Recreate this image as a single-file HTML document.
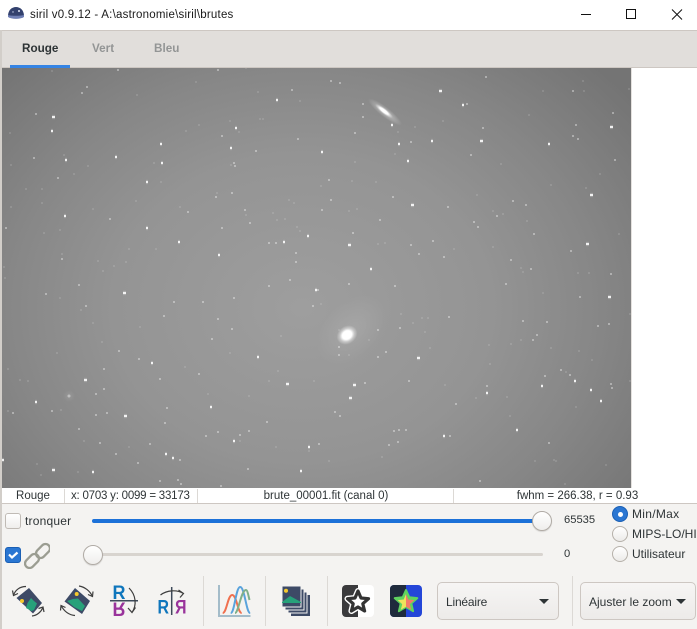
<!DOCTYPE html>
<html><head><meta charset="utf-8">
<style>
html,body{margin:0;padding:0;background:#fff}
#p{position:relative;width:697px;height:629px;overflow:hidden;background:#fff;font-family:"Liberation Sans",sans-serif;font-size:12px;color:#2e3436}
.a{position:absolute;white-space:nowrap}
.tab{font-weight:bold;font-size:11.7px;top:42px}
.st{top:489px;height:14px;line-height:14px;text-align:center;font-size:11.5px;color:#2e3436}
.sep{position:absolute;width:1px;background:#dcd9d5}
.rad{position:absolute;width:16px;height:16px;border-radius:50%;border:1px solid #b6b1aa;background:linear-gradient(#fff,#ecebe9);box-sizing:border-box}
.btn{position:absolute;border:1px solid #cdc7c2;border-radius:5px;background:linear-gradient(#f6f5f4,#edebe9);box-sizing:border-box;height:38px;top:582px}
.car{position:absolute;width:0;height:0;border-left:5px solid transparent;border-right:5px solid transparent;border-top:5px solid #2e3436}
.thumb{position:absolute;width:20px;height:20px;border-radius:50%;border:1px solid #b0aba5;box-sizing:border-box;background:linear-gradient(#fff,#efeeec);box-shadow:0 1px 1px rgba(0,0,0,.12)}
</style></head><body><div id="p">
<!-- title bar -->
<svg class="a" style="left:7px;top:6px" width="18" height="14" viewBox="0 0 18 14"><path d="M1 10C1 4 5 1 9 1s8 3 8 9l-2 2H3z" fill="#33416e"/><path d="M1 9c3 1 12 1 16 0v2c-4 2.500-12 2.500-16 0z" fill="#6f7fb5"/><circle cx="12" cy="5" r="1" fill="#dfe5f5"/><circle cx="6" cy="6" r=".7" fill="#c8d0ea"/></svg>
<div class="a" style="left:30px;top:9px;font-size:11.5px;color:#1a1a1a;letter-spacing:.22px">siril v0.9.12 - A:\astronomie\siril\brutes</div>
<svg class="a" style="left:570px;top:6px" width="120" height="18" viewBox="0 0 120 18" fill="none" stroke="#111" stroke-width="1"><path d="M11 8.500h10"/><rect x="56.500" y="3.500" width="9" height="9"/><path d="M102 4l10 10M112 4l-10 10" transform="translate(0,-.5)"/></svg>
<!-- notebook header -->
<div class="a" style="left:0;top:30px;width:697px;height:38px;background:#e1dedb;border-top:1px solid #cdc7c2;border-bottom:1px solid #cdc7c2;box-sizing:border-box"></div>
<div class="a tab" style="left:22px;color:#2e3436">Rouge</div>
<div class="a tab" style="left:92px;color:#939595">Vert</div>
<div class="a tab" style="left:154px;color:#939595">Bleu</div>
<div class="a" style="left:10px;top:65px;width:60px;height:3px;background:#3584e4"></div>
<!-- image -->
<svg class="a" style="left:2px;top:68px" width="629" height="420" viewBox="0 0 629 420">
<defs>
<radialGradient id="bg" gradientUnits="userSpaceOnUse" cx="0" cy="0" r="1" gradientTransform="translate(300 240) scale(420 340)">
<stop offset="0" stop-color="#9e9e9e"/><stop offset=".45" stop-color="#949494"/><stop offset=".7" stop-color="#878787"/><stop offset="1" stop-color="#747474"/></radialGradient>
<radialGradient id="h"><stop offset="0" stop-color="#fff" stop-opacity=".11"/><stop offset="1" stop-color="#fff" stop-opacity="0"/></radialGradient>
<radialGradient id="c"><stop offset="0" stop-color="#fff"/><stop offset=".45" stop-color="#fff"/><stop offset=".7" stop-color="#fff" stop-opacity=".4"/><stop offset="1" stop-color="#fff" stop-opacity="0"/></radialGradient>
<radialGradient id="m"><stop offset="0" stop-color="#fff" stop-opacity=".5"/><stop offset="1" stop-color="#fff" stop-opacity="0"/></radialGradient>
</defs>
<rect width="629" height="420" fill="url(#bg)"/>
<ellipse cx="350" cy="262" rx="42" ry="28" transform="rotate(-45 350 262)" fill="url(#h)"/>
<ellipse cx="345" cy="267" rx="11" ry="9" transform="rotate(-35 345 267)" fill="url(#c)"/>
<ellipse cx="383" cy="44" rx="21" ry="5" transform="rotate(38 383 44)" fill="url(#m)"/>
<ellipse cx="382" cy="43" rx="11" ry="2.800" transform="rotate(38 382 43)" fill="url(#c)"/>
<circle cx="67" cy="328" r="6" fill="url(#h)"/><circle cx="67" cy="328" r="1.500" fill="#c0c0c0"/>
<g transform="translate(-2 -68)" fill="none" stroke="#fff">
<path stroke-width="2" opacity=".12" d="M198 125h2M262 119h2M259 119h2M63 155h2M87 166h2M25 189h2M41 189h2M41 203h2M135 201h2M179 207h2M216 193h2M43 233h2M59 230h2M155 249h2M128 249h2M125 262h2M97 261h2M113 266h2M293 203h2M288 200h2M272 213h2M284 219h2M276 220h2M245 215h2M296 227h2M299 231h2M4 278h2M3 267h2M102 271h2M61 254h2M160 182h2M229 121h2M238 132h2M185 131h2M195 82h2M245 68h2M51 71h2M136 95h2M299 101h2M257 92h2M230 165h2M153 163h2M9 133h2M10 165h2M10 207h2M92 209h2M73 174h2M542 91h2M583 91h2M582 81h2M528 115h2M442 121h2M414 127h2M397 132h2M354 162h2M351 181h2M375 182h2M356 209h2M526 221h2M377 244h2M384 243h2M520 268h2M522 272h2M577 273h2M588 273h2M618 234h2M599 174h2M585 188h2M550 185h2M492 247h2M492 211h2M502 214h2M320 186h2M348 211h2M394 154h2M500 164h2M476 195h2M453 249h2M628 89h2M59 298h2M80 310h2M56 353h2M27 381h2M19 380h2M7 411h2M60 410h2M36 464h2M77 472h2M40 475h2M139 327h2M101 342h2M92 323h2M184 367h2M207 394h2M229 353h2M280 336h2M277 371h2M313 381h2M248 396h2M268 381h2M308 451h2M275 447h2M239 441h2M83 441h2M128 447h2M7 369h2M412 323h2M421 318h2M427 318h2M424 332h2M368 340h2M348 355h2M429 348h2M444 385h2M475 398h2M506 397h2M509 416h2M550 348h2M578 351h2M591 360h2M565 372h2M575 407h2M488 345h2M489 364h2M520 340h2M510 344h2M553 460h2M555 461h2M534 461h2M328 461h2M381 457h2M564 484h2M605 465h2M629 314h2M629 381h2M542 293h2M320 304h2M338 330h2M400 314h2"/>
<path stroke-width="2" opacity=".36" d="M86 87h2M81 93h2M291 90h2M35 114h2M221 136h2M297 139h2M255 151h2M33 158h2M57 178h2M233 163h2M234 166h2M231 193h2M215 197h2M244 210h2M187 212h2M109 219h2M221 228h2M5 228h2M268 243h2M275 243h2M61 259h2M289 280h2M295 253h2M295 262h2M249 223h2M117 70h2M217 70h2M330 81h2M339 83h2M466 104h2M362 117h2M362 104h2M354 133h2M410 142h2M470 155h2M575 125h2M572 136h2M577 139h2M572 91h2M614 160h2M379 220h2M432 241h2M410 245h2M525 205h2M570 251h2M482 128h2M328 180h2M321 210h2M330 200h2M392 197h2M447 207h2M473 222h2M477 227h2M496 216h2M533 234h2M510 260h2M530 269h2M610 274h2M418 254h2M443 257h2M512 201h2M352 233h2M612 113h2M485 77h2M85 306h2M118 351h2M198 374h2M231 329h2M211 339h2M173 302h2M233 298h2M103 369h2M103 389h2M95 394h2M95 415h2M106 413h2M12 413h2M166 408h2M159 379h2M138 359h2M163 316h2M205 436h2M239 435h2M248 431h2M266 422h2M137 463h2M115 454h2M78 429h2M179 460h2M177 480h2M180 484h2M159 481h2M247 469h2M312 306h2M318 444h2M149 444h2M99 443h2M164 423h2M202 302h2M51 411h2M220 486h2M217 319h2M268 286h2M78 285h2M45 294h2M217 432h2M394 286h2M317 290h2M377 330h2M448 317h2M338 347h2M338 355h2M385 352h2M377 357h2M364 383h2M408 381h2M334 412h2M522 321h2M546 322h2M597 326h2M608 324h2M532 340h2M536 335h2M560 370h2M569 375h2M544 376h2M610 384h2M611 388h2M486 386h2M455 404h2M548 443h2M449 436h2M398 430h2M393 431h2M405 430h2M318 444h2M388 445h2M397 442h2M479 481h2M579 297h2M505 284h2M348 284h2M399 328h2M339 416h2"/>
<defs><path id="br" d="M276 100h2M52 117h3M51 131h2M161 163h2M230 148h2M64 216h2M146 228h2M178 242h2M307 236h2M283 242h2M218 255h2M160 144h2M115 157h2M65 160h2M146 182h2M235 128h2M439 91h3M610 127h3M391 125h2M480 141h3M548 144h2M431 141h2M398 144h2M411 205h3M590 195h3M348 245h3M586 244h3M370 269h2M462 105h2M321 152h2M407 161h2M123 293h3M84 380h3M124 416h3M52 470h3M151 363h2M257 357h2M286 384h3M210 407h2M233 441h2M165 454h2M35 402h2M315 290h2M300 471h2M308 447h2M2 460h2M92 472h2M172 458h2M349 398h3M353 385h3M417 358h3M541 386h2M608 297h3M590 390h2M600 401h2M574 381h2M486 393h2M516 430h2M443 436h2"/></defs>
<use href="#br" stroke-width="4.500" opacity=".12"/>
<use href="#br" stroke-width="2.200" opacity=".88"/>
</g>
</svg>
<div class="a" style="left:631px;top:68px;width:1px;height:420px;background:#e4e1de"></div>
<!-- status strip -->
<div class="a st" style="left:3px;width:60px">Rouge</div>
<div class="a" style="left:64px;top:489px;width:1px;height:14px;background:#dcd9d5"></div>
<div class="a st" style="left:71px;text-align:left;letter-spacing:-.22px">x: 0703 y: 0099 = 33173</div>
<div class="a" style="left:197px;top:489px;width:1px;height:14px;background:#dcd9d5"></div>
<div class="a st" style="left:198px;width:256px">brute_00001.fit (canal 0)</div>
<div class="a" style="left:453px;top:489px;width:1px;height:14px;background:#dcd9d5"></div>
<div class="a st" style="left:454px;width:247px">fwhm = 266.38, r = 0.93</div>
<!-- control panel -->
<div class="a" style="left:2px;top:503px;width:695px;height:126px;background:#f4f3f1;border-top:1px solid #cdc7c2;box-sizing:border-box"></div>
<div class="a" style="left:0;top:30px;width:2px;height:599px;background:#d2cec9"></div>
<div class="a" style="left:5px;top:513px;width:16px;height:16px;border:1px solid #c0bbb5;border-radius:3px;box-sizing:border-box;background:linear-gradient(#fff,#efeeec)"></div>
<div class="a" style="left:25px;top:514px;font-size:12px;letter-spacing:.2px">tronquer</div>
<div class="a" style="left:92px;top:519px;width:445px;height:4px;background:#1c71d8;border-radius:2px"></div>
<div class="thumb" style="left:532px;top:511px"></div>
<div class="a" style="left:564px;top:514px;font-size:11.200px">65535</div>
<div class="a" style="left:5px;top:547px;width:16px;height:16px;background:#2a76d2;border:1px solid #1a5fb4;border-radius:3px;box-sizing:border-box"></div>
<svg class="a" style="left:5px;top:547px" width="16" height="16" viewBox="0 0 16 16"><path d="M4 7.500l3 3L12.500 5.500" fill="none" stroke="#fff" stroke-width="2.200"/></svg>
<svg class="a" style="left:24px;top:541px" width="26" height="28" viewBox="0 0 26 28" fill="none" stroke="#9b9d92" stroke-width="2.300"><rect x="11" y="5.500" width="16" height="9" rx="4.500" transform="rotate(-45 19 10)"/><rect x="0" y="15.500" width="16" height="9" rx="4.500" transform="rotate(-45 8 20)"/></svg>
<div class="a" style="left:100px;top:553px;width:443px;height:3px;background:#d8d4cf;border-radius:2px"></div>
<div class="thumb" style="left:83px;top:545px"></div>
<div class="a" style="left:564px;top:548px;font-size:11.200px">0</div>
<!-- radios -->
<div class="rad" style="left:612px;top:506px;background:#2a76d2;border-color:#1a5fb4"></div>
<div class="a" style="left:617.500px;top:511.500px;width:5px;height:5px;background:#fff;border-radius:50%"></div>
<div class="rad" style="left:612px;top:526px"></div>
<div class="rad" style="left:612px;top:546px"></div>
<div class="a" style="left:632px;top:507px;font-size:12px;letter-spacing:.3px">Min/Max</div>
<div class="a" style="left:632px;top:527px;font-size:12px">MIPS-LO/HI</div>
<div class="a" style="left:632px;top:547px;font-size:12px">Utilisateur</div>
<!-- toolbar separators -->
<div class="sep" style="left:203px;top:576px;height:50px"></div>
<div class="sep" style="left:265px;top:576px;height:50px"></div>
<div class="sep" style="left:327px;top:576px;height:50px"></div>
<div class="sep" style="left:572px;top:576px;height:50px"></div>
<!-- toolbar icons -->
<svg class="a" style="left:0;top:570px" width="330" height="59" viewBox="0 0 330 59">
<!-- rotate left -->
<path d="M29 18L42 33 33 43.500 16.500 28z" fill="#3d4a66"/>
<path d="M26 38l1.500-5 3.500-5 3 3 3 2.500-3 6.500-2.500 1z" fill="#27a17a"/>
<circle cx="22" cy="31" r="2" fill="#f5c92e"/>
<g fill="none" stroke="#3d3d3d" stroke-width="1.200"><path d="M26 16.500C20 16.500 15 20 13.500 25.500"/><path d="M12.500 20.500l1 5 4.500-2"/><path d="M32 46C37 45.500 41 42 43 37.500"/><path d="M38.500 38.500l4.500-1.500 1 5"/></g>
<!-- rotate right -->
<path d="M75 18L90 31 82 44 64.500 31.500z" fill="#3d4a66"/>
<path d="M67 31l6-2 5-.5 7 7.500-3 5-8-4z" fill="#27a17a"/>
<circle cx="76.700" cy="24" r="2" fill="#f5c92e"/>
<g fill="none" stroke="#3d3d3d" stroke-width="1.200"><path d="M79 16C85 17 90 21 92.500 26.500"/><path d="M93 21.500l-.5 5-4.500-2"/><path d="M61 35.500C64 41 69 45 75 45.500"/><path d="M60.500 40.500l.5-5 4.500 2"/></g>
<!-- mirror x -->
<text x="112.500" y="29" font-family="Liberation Sans" font-weight="bold" font-size="19" textLength="13" lengthAdjust="spacingAndGlyphs" fill="#0f76bc">R</text>
<text transform="translate(112.500 32.500) scale(1 -1)" font-family="Liberation Sans" font-weight="bold" font-size="19" textLength="13" lengthAdjust="spacingAndGlyphs" fill="#99339b">R</text>
<path d="M110 30.700h28" stroke="#3d4a5a" stroke-width="1.500"/>
<path d="M129 18C136 25 137 35 132 42.500M128 38l4 4.500 3.500-5" fill="none" stroke="#3d3d3d" stroke-width="1.200"/>
<!-- mirror y -->
<text x="157.500" y="43.500" font-family="Liberation Sans" font-weight="bold" font-size="19" textLength="11.500" lengthAdjust="spacingAndGlyphs" fill="#0f76bc">R</text>
<text transform="translate(186.500 43.500) scale(-1 1)" font-family="Liberation Sans" font-weight="bold" font-size="19" textLength="11.500" lengthAdjust="spacingAndGlyphs" fill="#99339b">R</text>
<path d="M171.700 17v28" stroke="#3d4a5a" stroke-width="1.500"/>
<path d="M160.500 25C167 20 177 19.500 183.500 23.500M178.500 20l5 3.500-3.500 4" fill="none" stroke="#3d3d3d" stroke-width="1.200"/>
<!-- histogram -->
<path d="M219 15v31h31.500" fill="none" stroke="#a4bcc9" stroke-width="2"/>
<path d="M222.700 43c4 0 5-18 9.500-18s5.500 18 9.500 18" fill="none" stroke="#f0704f" stroke-width="2"/>
<path d="M230.700 43c4 0 5-26 9.500-26s6 26 10 26" fill="none" stroke="#5aa3dc" stroke-width="2"/>
<path d="M235 43c3.500 0 6-23 11-23 1.500 0 2.500 6 3.500 10" fill="none" stroke="#7fb08a" stroke-width="2"/>
<!-- stack -->
<g><rect x="291" y="25" width="19" height="21" fill="#3d4a66"/><rect x="288" y="22" width="19" height="21" fill="#3d4a66" stroke="#f4f3f1"/><rect x="285" y="19" width="19" height="21" fill="#3d4a66" stroke="#f4f3f1"/><rect x="282" y="16" width="19" height="21" fill="#3d4a66" stroke="#f4f3f1"/><path d="M282 32l8-6 11 6v1h-19z" fill="#27a17a"/><circle cx="286" cy="20.700" r="2" fill="#f5c92e"/></g>
</svg>
<svg class="a" style="left:342px;top:585px" width="32" height="32" viewBox="0 0 32 32"><rect width="32" height="32" rx="4" fill="#fff"/><path d="M4 0h12v32H4a4 4 0 0 1-4-4V4a4 4 0 0 1 4-4z" fill="#3a3a3c"/><path d="M16 6l3 7 7.500.7-5.700 5 1.800 7.300-6.600-4-6.600 4 1.800-7.300-5.700-5 7.500-.7z" fill="#fff" stroke="#fff" stroke-width="6" stroke-linejoin="round"/><path d="M16 6l3 7 7.500.7-5.700 5 1.800 7.300-6.600-4-6.600 4 1.800-7.300-5.700-5 7.500-.7z" fill="#fff" stroke="#333" stroke-width="3.200" stroke-linejoin="round"/></svg>
<svg class="a" style="left:390px;top:585px" width="32" height="32" viewBox="0 0 32 32"><rect width="32" height="32" rx="4" fill="#2446d8"/><path d="M4 0h12v32H4a4 4 0 0 1-4-4V4a4 4 0 0 1 4-4z" fill="#1f2b3c"/><path d="M16 5l3.300 7.300 8 .8-6 5.300 1.800 7.800-7.100-4.200-7.100 4.200 1.800-7.800-6-5.300 8-.8z" fill="#5fd35f" stroke="#5fd35f" stroke-width="2" stroke-linejoin="round"/><path d="M16 9l2.300 5.500 6 .6-4.500 4 1.400 5.700-5.200-3.100z" fill="#f37a6a"/><path d="M16 9l-2.300 5.500-6 .6 4.500 4-1.400 5.700 5.200-3.100z" fill="#efe35c"/></svg>
<!-- buttons -->
<div class="btn" style="left:437px;width:122px"></div>
<div class="a" style="left:446px;top:595px;font-size:12px;letter-spacing:-.2px">Linéaire</div>
<div class="car" style="left:539px;top:599px"></div>
<div class="btn" style="left:580px;width:116px"></div>
<div class="a" style="left:589px;top:595px;font-size:12px">Ajuster le zoom</div>
<div class="car" style="left:676px;top:599px"></div>
</div></body></html>
